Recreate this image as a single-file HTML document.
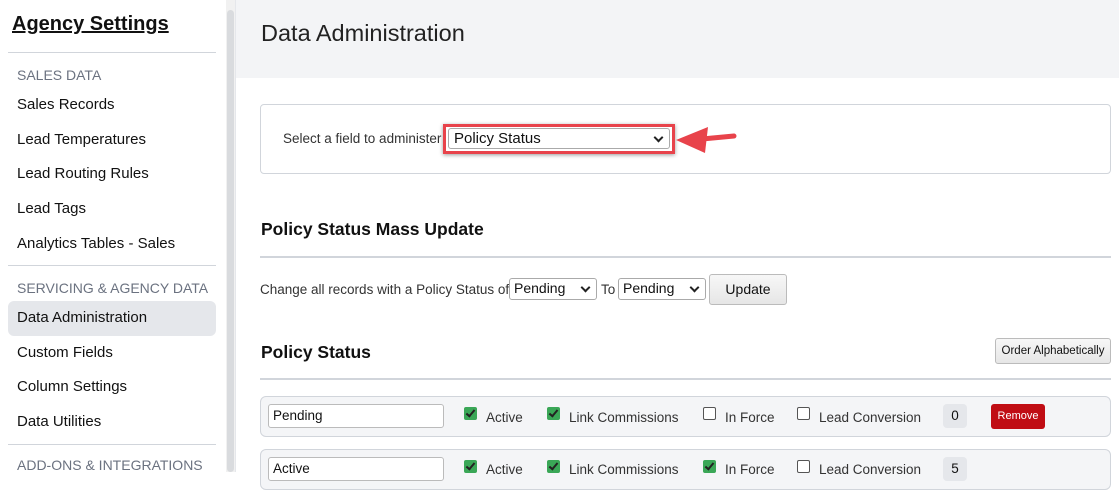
<!DOCTYPE html><html><head><style>
*{box-sizing:border-box}body{margin:0;width:1119px;height:472px;overflow:hidden;font-family:"Liberation Sans",sans-serif;background:#fff;position:relative;color:#111}
.a{position:absolute;white-space:nowrap}
.nav{font-size:15px;left:17px}
.cat{font-size:14px;color:#6b7280;left:17px}
.hr{position:absolute;height:1px;background:#d1d5db}
.sel{position:absolute;border:1px solid #aaa;border-radius:3px;background:#fff;font-size:14px;padding:1px 4px}
.sel:after{content:"";position:absolute;right:7px;top:5px;width:5px;height:5px;border-right:2px solid #222;border-bottom:2px solid #222;transform:rotate(45deg)}
.cb{position:absolute;width:13px;height:13px;border-radius:2px}
.on{background:#3aa757}.on:after{content:"";position:absolute;left:4px;top:1px;width:3px;height:7px;border-right:2px solid #222;border-bottom:2px solid #222;transform:rotate(40deg)}
.off{border:1px solid #555;background:#fff}
.lbl{position:absolute;font-size:13.5px;color:#333}
</style></head><body>
<div class="a" style="left:12px;top:13px;font-size:20px;font-weight:bold;text-decoration:underline">Agency Settings</div>
<div class="hr" style="left:8px;top:52px;width:208px"></div>
<div class="a cat" style="top:67px">SALES DATA</div>
<div class="a nav" style="top:96px">Sales Records</div>
<div class="a nav" style="top:131px">Lead Temperatures</div>
<div class="a nav" style="top:165px">Lead Routing Rules</div>
<div class="a nav" style="top:200px">Lead Tags</div>
<div class="a nav" style="top:235px">Analytics Tables - Sales</div>
<div class="hr" style="left:8px;top:265px;width:208px"></div>
<div class="a cat" style="top:280px">SERVICING &amp; AGENCY DATA</div>
<div class="a" style="left:8px;top:301px;width:208px;height:35px;background:#e5e7eb;border-radius:6px"></div>
<div class="a nav" style="top:309px">Data Administration</div>
<div class="a nav" style="top:344px">Custom Fields</div>
<div class="a nav" style="top:378px">Column Settings</div>
<div class="a nav" style="top:413px">Data Utilities</div>
<div class="hr" style="left:8px;top:444px;width:208px"></div>
<div class="a cat" style="top:457px">ADD-ONS &amp; INTEGRATIONS</div>
<div class="a" style="left:226px;top:0;width:9px;height:472px;background:#f1f1f1"></div>
<div class="a" style="left:227px;top:10px;width:7px;height:462px;background:#d9dbde;border-radius:4px"></div>
<div class="a" style="left:235px;top:0;width:1px;height:472px;background:#e5e7eb"></div>
<div class="a" style="left:236px;top:0;width:883px;height:78px;background:#f3f4f6"></div>
<div class="a" style="left:261px;top:20px;font-size:23.5px;color:#222">Data Administration</div>
<div class="a" style="left:260px;top:104px;width:851px;height:70px;border:1px solid #d1d5db;border-radius:4px"></div>
<div class="a" style="left:283px;top:131px;font-size:13.5px;color:#333">Select a field to administer</div>
<div class="a" style="left:443px;top:124px;width:232px;height:30px;border:3px solid #e8434b;box-shadow:0 1px 4px rgba(0,0,0,.4)"></div>
<div class="sel" style="left:448px;top:128px;width:222px;height:21px;font-size:15px;padding:1px 5px">Policy Status</div>
<svg class="a" style="left:672px;top:124px" width="70" height="32"><path d="M30 15 L62 12" stroke="#e8434b" stroke-width="5" stroke-linecap="round"/><path d="M4 16 L36 3 L33 29 Z" fill="#e8434b"/></svg>
<div class="a" style="left:261px;top:219px;font-size:17.5px;font-weight:bold">Policy Status Mass Update</div>
<div class="hr" style="left:260px;top:256px;width:851px;height:2px"></div>
<div class="a" style="left:260px;top:282px;font-size:13.5px;color:#333">Change all records with a Policy Status of</div>
<div class="sel" style="left:509px;top:278px;width:88px;height:22px">Pending</div>
<div class="a" style="left:601px;top:282px;font-size:13.5px;color:#333">To</div>
<div class="sel" style="left:618px;top:278px;width:88px;height:22px">Pending</div>
<div class="a" style="left:709px;top:274px;width:78px;height:31px;border:1px solid #bbb;border-radius:3px;background:linear-gradient(#f7f7f7,#e6e6e6);font-size:14px;text-align:center;line-height:29px">Update</div>
<div class="a" style="left:261px;top:342px;font-size:17.5px;font-weight:bold">Policy Status</div>
<div class="a" style="left:995px;top:338px;width:116px;height:26px;border:1px solid #bbb;border-radius:3px;background:linear-gradient(#f7f7f7,#e6e6e6);font-size:11.5px;text-align:center;line-height:24px">Order Alphabetically</div>
<div class="hr" style="left:260px;top:378px;width:851px;height:2px"></div>
<div class="a" style="left:260px;top:396px;width:851px;height:41px;border:1px solid #d1d5db;border-radius:6px;background:#f4f5f7"></div>
<div class="a" style="left:268px;top:404px;width:176px;height:24px;border:1px solid #bbb;border-radius:3px;background:#fff;font-size:13.5px;padding:3px 4px">Pending</div>
<div class="cb on" style="left:464px;top:407px"></div><div class="lbl" style="left:486px;top:410px">Active</div>
<div class="cb on" style="left:547px;top:407px"></div><div class="lbl" style="left:569px;top:410px">Link Commissions</div>
<div class="cb off" style="left:703px;top:407px"></div><div class="lbl" style="left:725px;top:410px">In Force</div>
<div class="cb off" style="left:797px;top:407px"></div><div class="lbl" style="left:819px;top:410px">Lead Conversion</div>
<div class="a" style="left:943px;top:404px;width:24px;height:24px;background:#e5e7eb;border-radius:4px;font-size:13.5px;text-align:center;line-height:24px">0</div>
<div class="a" style="left:991px;top:404px;width:54px;height:25px;background:#c00d14;border-radius:3px;color:#fff;font-size:11px;text-align:center;line-height:25px">Remove</div>
<div class="a" style="left:260px;top:449px;width:851px;height:41px;border:1px solid #d1d5db;border-radius:6px;background:#f4f5f7"></div>
<div class="a" style="left:268px;top:457px;width:176px;height:24px;border:1px solid #bbb;border-radius:3px;background:#fff;font-size:13.5px;padding:3px 4px">Active</div>
<div class="cb on" style="left:464px;top:460px"></div><div class="lbl" style="left:486px;top:462px">Active</div>
<div class="cb on" style="left:547px;top:460px"></div><div class="lbl" style="left:569px;top:462px">Link Commissions</div>
<div class="cb on" style="left:703px;top:460px"></div><div class="lbl" style="left:725px;top:462px">In Force</div>
<div class="cb off" style="left:797px;top:460px"></div><div class="lbl" style="left:819px;top:462px">Lead Conversion</div>
<div class="a" style="left:943px;top:457px;width:24px;height:24px;background:#e5e7eb;border-radius:4px;font-size:13.5px;text-align:center;line-height:24px">5</div>
</body></html>
